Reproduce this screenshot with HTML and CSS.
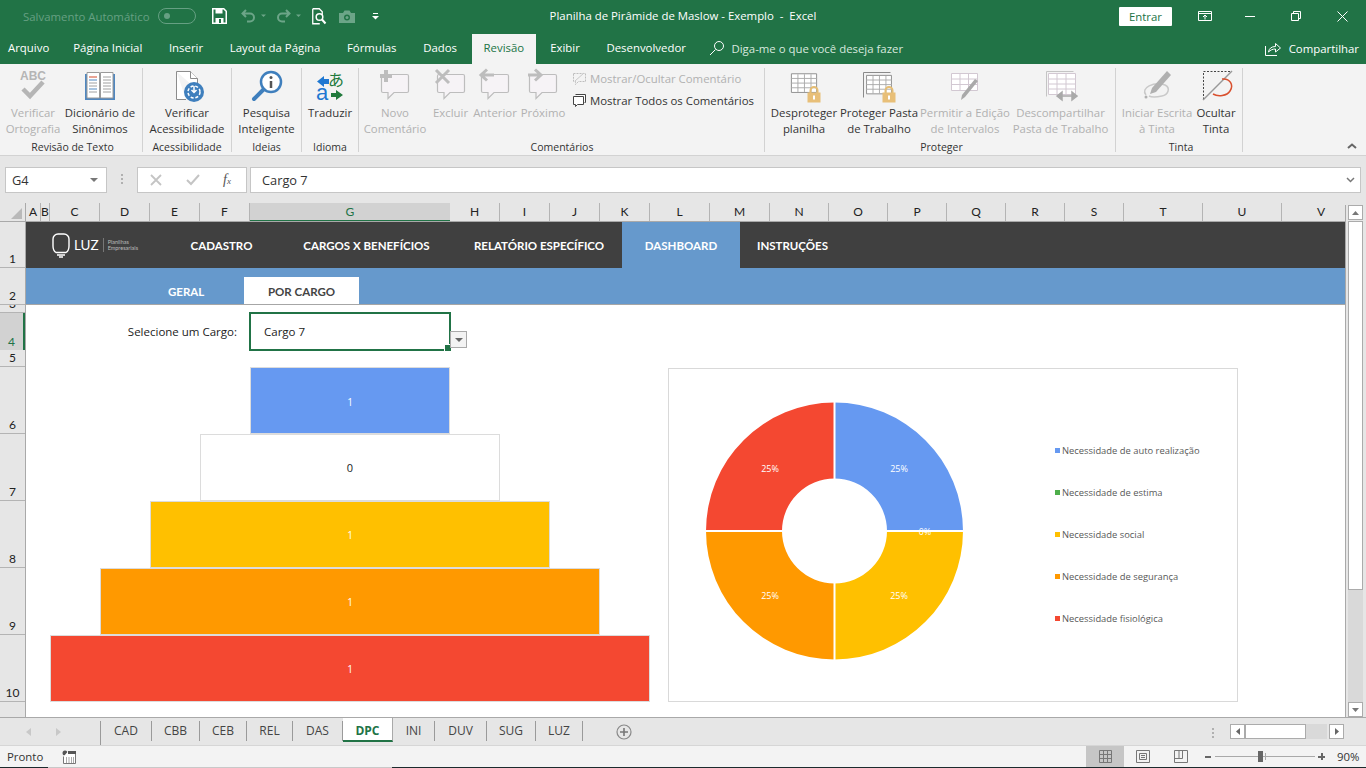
FILE: index.html
```html
<!DOCTYPE html>
<html lang="pt-BR">
<head>
    <meta charset="UTF-8">
    <title>Planilha de Pirâmide de Maslow - Exemplo - Excel</title>
    <link rel="stylesheet" href="styles.css">
</head>
<body>
    <svg class="defs" width="0" height="0">
        <symbol id="bubble" viewBox="0 0 34 36">
            <path d="M5 6.500h24a1.500 1.500 0 0 1 1.500 1.500v15a1.500 1.500 0 0 1-1.500 1.500H16l-6 6v-6H5a1.500 1.500 0 0 1-1.500-1.500V8A1.500 1.500 0 0 1 5 6.500z" fill="#f6f3f6" stroke="#bdbdbd" stroke-width="1.200"/>
        </symbol>
        <symbol id="sheet-grid" viewBox="0 0 30 26">
            <path d="M1.500 1.500h27v20h-27z" fill="#fff" stroke="#8a8a8a"/>
            <path d="M1 6.500h28M1 11.500h28M1 16.500h28M8.500 2v19M15.500 2v19M22.500 2v19" stroke="#a9a9a9" fill="none"/>
        </symbol>
        <symbol id="lock" viewBox="0 0 14 17">
            <path d="M3.500 7V4.500a3.500 3.500 0 0 1 7 0V7" fill="none" stroke="#e5bd73" stroke-width="2"/>
            <rect x="0.500" y="6.500" width="13" height="10" fill="#e8bf78"/>
            <rect x="6" y="9.500" width="2" height="4" fill="#fff"/>
        </symbol>
    </svg>

    <header class="titlebar">
        <div class="qat">
            <span class="autosave">Salvamento Automático</span>
            <span class="toggle"><i></i></span>
            <svg class="qat-save" width="15" height="16" viewBox="0 0 15 16"><path d="M.75.75h11l2.500 2.500v12h-13.500z" fill="none" stroke="#fff" stroke-width="1.500"/><path d="M3.500 1h7v4.500h-7zM3.500 10h8v5.500h-8z" fill="#fff"/><path d="M7 11h2v4H7z" fill="#217346"/></svg>
            <svg class="qat-undo" width="25" height="14" viewBox="0 0 25 14"><path d="M5 1L1.500 4.500 5 8M2 4.500h7a4 4 0 0 1 0 8H6" fill="none" stroke="#6ca588" stroke-width="2"/><path d="M20 5.500h5L22.500 8z" fill="#6ca588"/></svg>
            <svg class="qat-redo" width="25" height="14" viewBox="0 0 25 14"><path d="M10 1l3.500 3.500L10 8M13 4.500H6a4 4 0 0 0 0 8h3" fill="none" stroke="#6ca588" stroke-width="2"/><path d="M20 5.500h5L22.500 8z" fill="#6ca588"/></svg>
            <svg class="qat-preview" width="15" height="17" viewBox="0 0 15 17"><path d="M.75.75h6.500l3 3v3M.75.75v15h7" fill="none" stroke="#fff" stroke-width="1.300"/><circle cx="7.500" cy="9" r="3.300" fill="none" stroke="#fff" stroke-width="1.500"/><path d="M10 11.500l3.500 4" stroke="#fff" stroke-width="2"/></svg>
            <svg class="qat-camera" width="16" height="13" viewBox="0 0 16 13"><path d="M0 3h4l1.500-2.500h5L12 3h4v10H0z" fill="#6ca588"/><circle cx="8" cy="7.500" r="3" fill="#217346"/><circle cx="8" cy="7.500" r="1.500" fill="#6ca588"/></svg>
            <svg class="qat-more" width="7" height="7" viewBox="0 0 7 7"><path d="M1 .5h5" stroke="#fff"/><path d="M0 3h7L3.500 6.500z" fill="#fff"/></svg>
        </div>
        <div class="doc-title">Planilha de Pirâmide de Maslow - Exemplo&nbsp; -&nbsp; Excel</div>
        <div class="win-controls">
            <span class="signin">Entrar</span>
            <svg class="win-display" width="14" height="10" viewBox="0 0 14 10"><path d="M.5.500h13v9H.500zM.5 2.500h13M7 8.500V4M5 6l2-2 2 2" fill="none" stroke="#fff"/></svg>
            <svg class="win-min" width="10" height="1" viewBox="0 0 10 1"><path d="M0 .5h10" stroke="#fff"/></svg>
            <svg class="win-restore" width="10" height="10" viewBox="0 0 10 10"><path d="M.5 2.500h7v7h-7zM2.500 2.500v-2h7v7h-2" fill="none" stroke="#fff"/></svg>
            <svg class="win-close" width="11" height="11" viewBox="0 0 11 11"><path d="M.5.500l10 10M10.500.5l-10 10" stroke="#fff"/></svg>
        </div>
    </header>

    <nav class="tabs">
        <span class="tab tab-file">Arquivo</span>
        <span class="tab">Página Inicial</span>
        <span class="tab">Inserir</span>
        <span class="tab">Layout da Página</span>
        <span class="tab">Fórmulas</span>
        <span class="tab">Dados</span>
        <span class="tab tab-active">Revisão</span>
        <span class="tab">Exibir</span>
        <span class="tab">Desenvolvedor</span>
        <span class="tell-me">
            <svg width="16" height="16" viewBox="0 0 16 16"><circle cx="10" cy="6" r="4.500" fill="none" stroke="#fff"/><path d="M6.500 9.500L1 15" stroke="#fff"/></svg>
            Diga-me o que você deseja fazer
        </span>
        <span class="share">
            <svg width="16" height="15" viewBox="0 0 16 15"><path d="M.5 5v9.500h11.500M3.500 11c.5-3.500 3-5.500 7-5.500V2.500l5 4.500-5 4V8c-3 0-5 1-7 3z" fill="none" stroke="#fff"/></svg>
            Compartilhar
        </span>
    </nav>

    <section class="ribbon">
        <div class="group group-text">
            <div class="group-items">
                <div class="rb w-spell off">
                    <svg class="rb-icon" width="34" height="36" viewBox="0 0 34 36"><text x="17" y="12" text-anchor="middle" class="abc">ABC</text><path d="M7 21l7 7L27 14" fill="none" stroke="#b5b5b5" stroke-width="4.500"/></svg>
                    <span>Verificar<br>Ortografia</span>
                </div>
                <div class="rb w-thes">
                    <svg class="rb-icon" width="34" height="36" viewBox="0 0 34 36"><path d="M2 6h30v26H2z" fill="#4f87c0"/><path d="M4 4.500h12.500V30H4zM17.500 4.500H30V30H17.500z" fill="#fff" stroke="#9a9a9a"/><path d="M6 9h8" stroke="#d2492a"/><path d="M6 12h8M6 21h8" stroke="#4f87c0"/><path d="M6 15h8M6 18h8M6 24h8M20 9h8M20 12h8M20 15h8M20 18h8M20 21h8M20 24h8" stroke="#a0a0a0"/></svg>
                    <span>Dicionário de<br>Sinônimos</span>
                </div>
            </div>
            <div class="group-label">Revisão de Texto</div>
        </div>
        <div class="group group-access">
            <div class="group-items">
                <div class="rb w-access">
                    <svg class="rb-icon" width="34" height="36" viewBox="0 0 34 36"><path d="M6.500 3.500h14l7 7V22M6.500 3.500v28H16" fill="#fff" stroke="#8c8c8c"/><path d="M20.500 3.500v7h7" fill="#fff" stroke="#8c8c8c"/><circle cx="24" cy="24" r="10" fill="#3f7fbd"/><circle cx="24" cy="24" r="6" fill="none" stroke="#fff" stroke-width="1.500" stroke-dasharray="3 1.800"/><path d="M24 18v6M21.500 22l2.500 2.500 2.500-2.500" fill="none" stroke="#fff" stroke-width="1.500"/></svg>
                    <span>Verificar<br>Acessibilidade</span>
                </div>
            </div>
            <div class="group-label">Acessibilidade</div>
        </div>
        <div class="group group-ideas">
            <div class="group-items">
                <div class="rb w-smart">
                    <svg class="rb-icon" width="34" height="36" viewBox="0 0 34 36"><circle cx="21" cy="14" r="10" fill="#fff" stroke="#3f7fbd" stroke-width="2.500"/><path d="M13.500 21.500L4 31" stroke="#3f7fbd" stroke-width="4" stroke-linecap="round"/><path d="M21 13v7" stroke="#555" stroke-width="2.500"/><circle cx="21" cy="9.500" r="1.500" fill="#555"/></svg>
                    <span>Pesquisa<br>Inteligente</span>
                </div>
            </div>
            <div class="group-label">Ideias</div>
        </div>
        <div class="group group-lang">
            <div class="group-items">
                <div class="rb w-trans">
                    <svg class="rb-icon" width="34" height="36" viewBox="0 0 34 36"><text x="15" y="18" class="kana">あ</text><text x="3" y="32" class="latin">a</text><path d="M4 13.500L11 8v3h5v5h-5v3z" fill="#1f78d1"/><path d="M30 27l-7-5v3h-5v4h5v3z" fill="#217a3c"/></svg>
                    <span>Traduzir</span>
                </div>
            </div>
            <div class="group-label">Idioma</div>
        </div>
        <div class="group group-comments">
            <div class="group-items">
                <div class="rb w-new off">
                    <svg class="rb-icon" width="34" height="36" viewBox="0 0 34 36"><use href="#bubble" width="34" height="36"/><path d="M8 2v12M2 8h12" stroke="#bdbdbd" stroke-width="4"/></svg>
                    <span>Novo<br>Comentário</span>
                </div>
                <div class="rb w-del off">
                    <svg class="rb-icon" width="34" height="36" viewBox="0 0 34 36"><use href="#bubble" width="34" height="36"/><path d="M2 2l13 13M15 2L2 15" stroke="#bdbdbd" stroke-width="3"/></svg>
                    <span>Excluir</span>
                </div>
                <div class="rb w-prev off">
                    <svg class="rb-icon" width="34" height="36" viewBox="0 0 34 36"><use href="#bubble" width="34" height="36"/><path d="M16 7H5M9 1.500L3 7l6 5.500" fill="none" stroke="#bdbdbd" stroke-width="3"/></svg>
                    <span>Anterior</span>
                </div>
                <div class="rb w-next off">
                    <svg class="rb-icon" width="34" height="36" viewBox="0 0 34 36"><use href="#bubble" width="34" height="36"/><path d="M2 7h11M9 1.500L15 7l-6 5.500" fill="none" stroke="#bdbdbd" stroke-width="3"/></svg>
                    <span>Próximo</span>
                </div>
                <div class="rb-small">
                    <div class="small-row off">
                        <svg width="15" height="15" viewBox="0 0 15 15"><path d="M1.500 2.500h12v8h-7l-3 3v-3h-2z" fill="none" stroke="#bdbdbd" stroke-dasharray="2 1"/><path d="M3 10l9-8" stroke="#c9c9c9"/></svg>
                        Mostrar/Ocultar Comentário
                    </div>
                    <div class="small-row">
                        <svg width="15" height="15" viewBox="0 0 15 15"><path d="M3.500 1.500h10v8h-1M1.500 3.500h10v8h-6l-2 2v-2h-2z" fill="#fff" stroke="#444"/></svg>
                        Mostrar Todos os Comentários
                    </div>
                </div>
            </div>
            <div class="group-label">Comentários</div>
        </div>
        <div class="group group-protect">
            <div class="group-items">
                <div class="rb w-unprotect">
                    <svg class="rb-icon" width="34" height="36" viewBox="0 0 34 36"><use href="#sheet-grid" x="3" y="4" width="28" height="25"/><use href="#lock" x="20" y="18" width="14" height="17"/></svg>
                    <span>Desproteger<br>planilha</span>
                </div>
                <div class="rb w-book">
                    <svg class="rb-icon" width="34" height="36" viewBox="0 0 34 36"><path d="M1.500 4.500h27M1.500 4.500v25" stroke="#8a8a8a" fill="none"/><use href="#sheet-grid" x="3" y="6" width="28" height="24"/><use href="#lock" x="20" y="18" width="14" height="17"/></svg>
                    <span>Proteger Pasta<br>de Trabalho</span>
                </div>
                <div class="rb w-ranges off">
                    <svg class="rb-icon" width="34" height="36" viewBox="0 0 34 36"><path d="M3.500 5.500h26v17h-26zM3.500 11h26M3.500 16.500h26M12 5.500v17M20.500 5.500v17" fill="#fff" stroke="#d2c8d2"/><path d="M30 13L17 29l-4 3 1-5 13-16z" fill="#a9a9a9"/></svg>
                    <span>Permitir a Edição<br>de Intervalos</span>
                </div>
                <div class="rb w-unshare off">
                    <svg class="rb-icon" width="34" height="36" viewBox="0 0 34 36"><path d="M2.500 3.500h27M2.500 3.500v25" stroke="#c4c4c4" fill="none"/><path d="M4.500 5.500h27v21h-27zM4.500 11h27M4.500 16h27M4.500 21h27M13 5.500v21M22 5.500v21" fill="#fff" stroke="#d2c8d2"/><path d="M13 28h20M13 28l5-4v8zM33 28l-5-4v8z" fill="#a9a9a9" stroke="#a9a9a9" stroke-width="1.500"/></svg>
                    <span>Descompartilhar<br>Pasta de Trabalho</span>
                </div>
            </div>
            <div class="group-label">Proteger</div>
        </div>
        <div class="group group-ink">
            <div class="group-items">
                <div class="rb w-startink off">
                    <svg class="rb-icon" width="34" height="36" viewBox="0 0 34 36"><path d="M6 27C0 20 14 13 25 17c6 3 3 10-3 11-5 1-11 1-13 0" fill="none" stroke="#c9c9c9" stroke-width="1.500"/><path d="M27 3l4 4-15 17-6 2 2-6z" fill="#b0b0b0"/><circle cx="6" cy="29" r="1.500" fill="#b0b0b0"/></svg>
                    <span>Iniciar Escrita<br>à Tinta</span>
                </div>
                <div class="rb w-hideink">
                    <svg class="rb-icon" width="34" height="36" viewBox="0 0 34 36"><path d="M4.500 31.500V3.500h28" fill="none" stroke="#444" stroke-dasharray="2 1.500"/><path d="M4 32L33 3" stroke="#999" stroke-width="1.500"/><path d="M23 11c8-1 12 6 8 12-3 5-12 6-17 3" fill="none" stroke="#d9502e" stroke-width="1.500"/></svg>
                    <span>Ocultar<br>Tinta</span>
                </div>
            </div>
            <div class="group-label">Tinta</div>
        </div>
        <svg class="collapse" width="10" height="6" viewBox="0 0 10 6"><path d="M1 5l4-3.500L9 5" fill="none" stroke="#666" stroke-width="2"/></svg>
    </section>

    <section class="formula-bar">
        <div class="name-box">G4<svg width="8" height="4" viewBox="0 0 8 4"><path d="M0 0h8L4 4z" fill="#777"/></svg></div>
        <div class="fb-dots"><i></i><i></i><i></i></div>
        <div class="fb-buttons">
            <svg width="12" height="12" viewBox="0 0 12 12"><path d="M1 1l10 10M11 1L1 11" stroke="#c4c4c4" stroke-width="1.800"/></svg>
            <svg width="14" height="12" viewBox="0 0 14 12"><path d="M1 6l4 4 8-9" fill="none" stroke="#c4c4c4" stroke-width="2"/></svg>
            <span class="fx">f<sub>x</sub></span>
        </div>
        <div class="fb-input">Cargo 7<svg width="9" height="6" viewBox="0 0 9 6"><path d="M1 1l3.500 3.500L8 1" fill="none" stroke="#777" stroke-width="1.500"/></svg></div>
    </section>

    <div class="col-headers">
        <span class="corner"><i></i></span>
        <span>A</span><span>B</span><span>C</span><span>D</span><span>E</span><span>F</span>
        <span class="selected">G</span>
        <span>H</span><span>I</span><span>J</span><span>K</span><span>L</span><span>M</span><span>N</span>
        <span>O</span><span>P</span><span>Q</span><span>R</span><span>S</span><span>T</span><span>U</span><span>V</span>
    </div>

    <main class="workbook">
        <div class="row-headers">
            <span class="r-1">1</span>
            <span class="r-2">2</span>
            <span class="r-3">3</span>
            <span class="r-4 selected">4</span>
            <span class="r-5">5</span>
            <span class="r-6">6</span>
            <span class="r-6">7</span>
            <span class="r-6">8</span>
            <span class="r-6">9</span>
            <span class="r-6">10</span>
            <span class="r-rest"></span>
        </div>

        <div class="sheet">
            <div class="sheet-nav">
                <div class="logo">
                    <svg width="18" height="25" viewBox="0 0 18 25"><path d="M4 19.500C1.500 18 1 15 1 13V6a5 5 0 0 1 5-5h6a5 5 0 0 1 5 5v7c0 2-.5 5-3 6.500z" fill="none" stroke="#fff" stroke-width="1.400"/><path d="M5 22h8M7 24h4" stroke="#fff" stroke-width="1.300"/></svg>
                    <span class="logo-word">LUZ</span>
                    <span class="logo-sub">Planilhas<br>Empresariais</span>
                </div>
                <span class="nav-item n-cad">CADASTRO</span>
                <span class="nav-item n-cargos">CARGOS X BENEFÍCIOS</span>
                <span class="nav-item n-rel">RELATÓRIO ESPECÍFICO</span>
                <span class="nav-item n-dash">DASHBOARD</span>
                <span class="nav-item n-inst">INSTRUÇÕES</span>
            </div>
            <div class="sheet-subnav">
                <span class="sub-geral">GERAL</span>
                <span class="sub-cargo">POR CARGO</span>
            </div>
            <div class="picker">
                <span class="picker-label">Selecione um Cargo:</span>
                <span class="picker-cell">Cargo 7</span>
                <span class="picker-drop"><svg width="8" height="4" viewBox="0 0 8 4"><path d="M0 0h8L4 4z" fill="#666"/></svg></span>
            </div>
            <div class="dashboard">
                <div class="pyramid">
                    <div class="step s1">1</div>
                    <div class="step s2">0</div>
                    <div class="step s3">1</div>
                    <div class="step s4">1</div>
                    <div class="step s5">1</div>
                </div>
                <div class="chart">
                    <svg class="donut" width="280" height="280" viewBox="-140.500 -140 280 280">
                        <path d="M0 -128.500A128.500 128.500 0 0 1 128.500 0H52.500A52.500 52.500 0 0 0 0 -52.500z" fill="#6699f1"/>
                        <path d="M128.500 0A128.500 128.500 0 0 1 0 128.500V52.500A52.500 52.500 0 0 0 52.500 0z" fill="#ffc000"/>
                        <path d="M0 128.500A128.500 128.500 0 0 1 -128.500 0H-52.500A52.500 52.500 0 0 0 0 52.500z" fill="#ff9900"/>
                        <path d="M-128.500 0A128.500 128.500 0 0 1 0 -128.500V-52.500A52.500 52.500 0 0 0 -52.500 0z" fill="#f44831"/>
                        <path d="M0 -130V-52M0 52V130M-130 0H-52M52 0H130" stroke="#fff" stroke-width="2"/>
                        <g class="pct">
                            <text x="64.500" y="-59">25%</text>
                            <text x="90.500" y="4">0%</text>
                            <text x="64.500" y="68">25%</text>
                            <text x="-64.500" y="68">25%</text>
                            <text x="-64.500" y="-59">25%</text>
                        </g>
                    </svg>
                    <ul class="legend">
                        <li><i class="k1"></i>Necessidade de auto realização</li>
                        <li><i class="k2"></i>Necessidade de estima</li>
                        <li><i class="k3"></i>Necessidade social</li>
                        <li><i class="k4"></i>Necessidade de segurança</li>
                        <li><i class="k5"></i>Necessidade fisiológica</li>
                    </ul>
                </div>
            </div>
        </div>

        <div class="vscroll">
            <span class="sb-btn"><svg width="7" height="4" viewBox="0 0 7 4"><path d="M3.500 0L7 4H0z" fill="#777"/></svg></span>
            <span class="sb-thumb"></span>
            <span class="sb-track"></span>
            <span class="sb-btn"><svg width="7" height="4" viewBox="0 0 7 4"><path d="M0 0h7L3.500 4z" fill="#777"/></svg></span>
        </div>
    </main>

    <section class="sheet-tabs">
        <div class="tab-arrows">
            <svg width="5" height="8" viewBox="0 0 5 8"><path d="M5 0v8L0 4z" fill="#c8c8c8"/></svg>
            <svg width="5" height="8" viewBox="0 0 5 8"><path d="M0 0v8l5-4z" fill="#c8c8c8"/></svg>
        </div>
        <div class="stabs">
            <span class="t-cad">CAD</span>
            <span class="t-cbb">CBB</span>
            <span class="t-ceb">CEB</span>
            <span class="t-rel">REL</span>
            <span class="t-das">DAS</span>
            <span class="t-dpc active">DPC</span>
            <span class="t-ini">INI</span>
            <span class="t-duv">DUV</span>
            <span class="t-sug">SUG</span>
            <span class="t-luz">LUZ</span>
        </div>
        <svg class="add-sheet" width="16" height="16" viewBox="0 0 16 16"><circle cx="8" cy="8" r="7" fill="none" stroke="#888" stroke-width="1.200"/><path d="M8 4v8M4 8h8" stroke="#777" stroke-width="1.600"/></svg>
        <div class="hscroll">
            <div class="fb-dots"><i></i><i></i><i></i></div>
            <span class="hs-btn"><svg width="4" height="7" viewBox="0 0 4 7"><path d="M4 0v7L0 3.500z" fill="#666"/></svg></span>
            <span class="hs-thumb"></span>
            <span class="hs-track"></span>
            <span class="hs-btn"><svg width="4" height="7" viewBox="0 0 4 7"><path d="M0 0v7l4-3.500z" fill="#666"/></svg></span>
        </div>
    </section>

    <footer class="statusbar">
        <span class="ready">Pronto</span>
        <svg class="macro" width="14" height="14" viewBox="0 0 14 14"><circle cx="3" cy="3" r="2.500" fill="#555"/><path d="M6 1.500h7.500v12H1.500V6.500" fill="#fff" stroke="#777"/><path d="M6 1h8v3H6z" fill="#555"/><path d="M4 8h1M6.500 8h1M9 8h1M11 8h1M4 10h1M6.500 10h1M9 10h1M11 10h1M4 12h1M6.500 12h1M9 12h1M11 12h1" stroke="#555"/></svg>
        <div class="views">
            <span class="view on"><svg width="13" height="13" viewBox="0 0 13 13"><path d="M.5.500h12v12H.500zM4.500.5v12M8.500.5v12M.5 4.500h12M.5 8.500h12" fill="none" stroke="#777"/></svg></span>
            <span class="view"><svg width="14" height="13" viewBox="0 0 14 13"><path d="M.5.500h13v12H.500z" fill="none" stroke="#777"/><path d="M3.500 3.500h7v6h-7zM5 5.500h4M5 7.500h4" fill="none" stroke="#777"/></svg></span>
            <span class="view"><svg width="14" height="13" viewBox="0 0 14 13"><path d="M.5.500h13v12H.500zM.5 8.500h8V.5M5 8.500V.5" fill="none" stroke="#777"/></svg></span>
        </div>
        <div class="zoom">
            <span class="z-minus"></span>
            <span class="z-slider"><i></i><b></b></span>
            <span class="z-plus"></span>
            <span class="z-val">90%</span>
        </div>
    </footer>
    <div class="window-edge"><i></i><b></b><i></i></div>
</body>
</html>
```

FILE: styles.css
```css
* {
    box-sizing: border-box;
}
html, body {
    margin: 0;
    padding: 0;
}
body {
    width: 1366px;
    height: 768px;
    overflow: hidden;
    font-family: "Open Sans", "Liberation Sans", sans-serif;
    font-size: 11.4px;
    color: #333;
    background-color: #e6e6e6;
}
svg {
    display: block;
    flex: none;
}
.defs {
    position: absolute;
}

/* Title bar */
.titlebar {
    height: 32px;
    display: flex;
    align-items: center;
    background-color: #217346;
    color: #fff;
    position: relative;
}
.qat {
    display: flex;
    align-items: center;
    padding-left: 23px;
}
.autosave {
    width: 135px;
    color: #66a083;
    white-space: nowrap;
}
.toggle {
    width: 38px;
    height: 16px;
    border: 1px solid #66a083;
    border-radius: 8px;
    padding: 4px 5px;
}
.toggle i {
    display: block;
    width: 6px;
    height: 6px;
    border-radius: 50%;
    background-color: #66a083;
}
.qat-save { margin-left: 16px; }
.qat-undo { margin-left: 14px; }
.qat-redo { margin-left: 10px; }
.qat-preview { margin-left: 11px; }
.qat-camera { margin-left: 12px; }
.qat-more { margin-left: 17px; }
.doc-title {
    text-align: center;
    position: absolute;
    left: 0;
    right: 0;
    top: 8px;
}
.win-controls {
    margin-left: auto;
    display: flex;
    align-items: center;
    position: relative;
    padding-right: 18px;
}
.signin {
    width: 53px;
    height: 19px;
    line-height: 19px;
    text-align: center;
    background-color: #fff;
    color: #217346;
    border-radius: 1px;
}
.win-display { margin-left: 26px; }
.win-min { margin-left: 33px; }
.win-restore { margin-left: 36px; }
.win-close { margin-left: 36px; }

/* Ribbon tabs */
.tabs {
    height: 32px;
    display: flex;
    align-items: flex-end;
    background-color: #217346;
    color: #fff;
    padding-left: 8px;
}
.tab {
    height: 30px;
    line-height: 28px;
    margin-right: 26.600px;
    white-space: nowrap;
}
.tab-file {
    margin-right: 24px;
}
.tab-active {
    background-color: #f3f3f3;
    color: #217346;
    padding: 0 12px;
    margin: 0 14px 0 -12px;
}
.tell-me {
    display: flex;
    align-items: center;
    gap: 6px;
    height: 28px;
    margin-bottom: 2px;
    margin-left: -3px;
    color: #d8e8df;
    white-space: nowrap;
}
.share {
    display: flex;
    align-items: center;
    gap: 8px;
    height: 28px;
    margin-bottom: 2px;
    margin-left: auto;
    padding-right: 7px;
}

/* Ribbon */
.ribbon {
    height: 92px;
    display: flex;
    position: relative;
    background-color: #f3f3f3;
    border-bottom: 1px solid #d2d2d2;
}
.group {
    height: 84px;
    margin-top: 4px;
    border-right: 1px solid #d2d2d2;
    display: flex;
    flex-direction: column;
    flex: none;
}
.group-items {
    flex: 1;
    display: flex;
}
.group-label {
    height: 13px;
    line-height: 17px;
    text-align: center;
    font-size: 10.500px;
    color: #333;
    white-space: nowrap;
}
.group-text { width: 143px; padding-left: 3px; }
.group-access { width: 89px; }
.group-ideas { width: 70px; }
.group-lang { width: 57px; }
.group-comments { width: 406px; padding-left: 1px; }
.group-protect { width: 351px; padding-left: 3px; }
.group-ink { width: 127px; padding-left: 4px; }
.rb {
    display: flex;
    flex-direction: column;
    align-items: center;
    text-align: center;
    line-height: 16px;
    flex: none;
    white-space: nowrap;
}
.rb span {
    margin-top: 1px;
}
.off {
    color: #b1b1b1;
}
.w-spell { width: 60px; }
.w-thes { width: 74px; }
.w-access { width: 88px; }
.w-smart { width: 69px; }
.w-trans { width: 56px; }
.w-new { width: 70px; }
.w-del { width: 41px; }
.w-prev { width: 48px; }
.w-next { width: 48px; }
.w-unprotect { width: 72px; }
.w-book { width: 78px; }
.w-ranges { width: 94px; }
.w-unshare { width: 97px; }
.w-startink { width: 74px; }
.w-hideink { width: 44px; }
.rb-small {
    margin-left: 5px;
    padding-top: 2px;
    display: flex;
    flex-direction: column;
    gap: 5px;
}
.small-row {
    display: flex;
    align-items: center;
    gap: 3px;
    height: 17px;
    white-space: nowrap;
}
.abc {
    font-family: "Liberation Sans", sans-serif;
    font-size: 12px;
    font-weight: bold;
    fill: #b5b5b5;
}
.kana {
    font-family: "Noto Sans CJK JP", sans-serif;
    font-size: 16px;
    fill: #217a3c;
}
.latin {
    font-family: "Liberation Sans", sans-serif;
    font-size: 22px;
    fill: #1f78d1;
}
.collapse {
    position: absolute;
    right: 9px;
    bottom: 6px;
}

/* Formula bar */
.formula-bar {
    height: 47px;
    display: flex;
    align-items: flex-start;
    padding: 11px 5px 0;
    font-size: 12.800px;
}
.name-box, .fb-buttons, .fb-input {
    height: 26px;
    background-color: #fff;
    border: 1px solid #c6c6c6;
    display: flex;
    align-items: center;
}
.name-box {
    width: 102px;
    justify-content: space-between;
    padding: 0 8px 0 6px;
}
.fb-dots {
    width: 30px;
    display: flex;
    flex-direction: column;
    align-items: center;
    gap: 2px;
    padding-top: 7px;
}
.fb-dots i {
    width: 2px;
    height: 2px;
    background-color: #b0b0b0;
}
.fb-buttons {
    width: 110px;
    padding-left: 12px;
    gap: 24px;
}
.fx {
    font-family: "Liberation Serif", serif;
    font-style: italic;
    font-size: 14px;
    color: #555;
    margin-left: -1px;
}
.fx sub {
    font-size: 9px;
    vertical-align: baseline;
}
.fb-input {
    flex: 1;
    margin-left: 3px;
    padding: 0 5px 0 11px;
    justify-content: space-between;
}

/* Column and row headers */
.col-headers {
    height: 19px;
    width: 1345px;
    overflow: hidden;
    display: grid;
    grid-template-columns: 26px 15px 9px 50px 50px 50px 50px 200px 50px 50px 50px 50px 60px 60px 59px 59px 59px 59px 59px 59px 79px 79px 79px;
    font-family: "Lato", sans-serif;
    font-size: 12px;
    color: #222;
    border-bottom: 1px solid #a9a9a9;
}
.col-headers span {
    text-align: center;
    line-height: 18px;
    border-right: 1px solid #b4b4b4;
    position: relative;
}
.col-headers .selected {
    background-color: #d2d2d2;
    color: #217346;
    border-right: none;
    border-bottom: 2px solid #217346;
    height: 19px;
}
.col-headers .corner {
    border-right: 1px solid #a9a9a9;
}
.corner i {
    position: absolute;
    right: 3px;
    bottom: 3px;
    width: 0;
    height: 0;
    border-left: 11px solid transparent;
    border-bottom: 11px solid #b9b9b9;
}
.workbook {
    height: 495px;
    display: flex;
}
.row-headers {
    width: 26px;
    flex: none;
    display: flex;
    flex-direction: column;
    font-family: "Lato", sans-serif;
    font-size: 12px;
    color: #222;
    border-right: 1px solid #a9a9a9;
}
.row-headers span {
    display: flex;
    align-items: flex-end;
    justify-content: center;
    padding-bottom: 1px;
    border-bottom: 1px solid #b4b4b4;
    overflow: hidden;
    line-height: 15px;
}
.row-headers .selected {
    background-color: #d2d2d2;
    color: #217346;
    border-right: 2px solid #217346;
    border-bottom: none;
}
.r-1 { height: 46px; }
.r-2 { height: 37px; }
.r-3 { height: 8px; }
.r-4 { height: 37px; }
.r-5 { height: 17px; }
.r-6 { height: 67px; }
.r-rest { height: 15px; border-bottom: none !important; }

/* Sheet content */
.sheet {
    width: 1319px;
    flex: none;
    display: flex;
    flex-direction: column;
    background-color: #fff;
    font-family: "Lato", sans-serif;
}
.sheet-nav {
    height: 46px;
    flex: none;
    display: flex;
    align-items: center;
    background-color: #404040;
    color: #fff;
    font-weight: bold;
    font-size: 11.500px;
}
.logo {
    width: 165px;
    flex: none;
    display: flex;
    align-items: center;
    padding-left: 26px;
    font-weight: normal;
}
.logo-word {
    font-size: 13.500px;
    margin-left: 4px;
    padding-right: 4px;
    border-right: 1px solid #777;
    line-height: 14px;
}
.logo-sub {
    font-size: 5.500px;
    line-height: 6px;
    margin-left: 4px;
    color: #bbb;
    white-space: nowrap;
}
.nav-item {
    height: 46px;
    flex: none;
    display: flex;
    align-items: center;
    justify-content: center;
    white-space: nowrap;
}
.n-cad { width: 61px; }
.n-cargos { width: 123px; margin-left: 53px; }
.n-rel { width: 128px; margin-left: 47px; }
.n-dash { width: 118px; margin-left: 19px; background-color: #6699cc; }
.n-inst { width: 71px; margin-left: 17px; }
.sheet-subnav {
    height: 37px;
    flex: none;
    display: flex;
    align-items: flex-end;
    background-color: #6699cc;
    color: #fff;
    font-weight: bold;
    font-size: 11.500px;
    border-bottom: 1px solid #a6a6a6;
}
.sub-geral {
    width: 35px;
    margin-left: 142px;
    margin-bottom: 6px;
    white-space: nowrap;
}
.sub-cargo {
    width: 115px;
    height: 27px;
    line-height: 30px;
    margin-left: 41px;
    text-align: center;
    background-color: #fff;
    color: #444;
}
.picker {
    height: 37px;
    flex: none;
    margin-top: 8px;
    display: flex;
    align-items: center;
    position: relative;
    font-family: "Open Sans", sans-serif;
    font-size: 11.500px;
    color: #222;
}
.picker-label {
    width: 211px;
    text-align: right;
    white-space: nowrap;
}
.picker-cell {
    width: 202px;
    height: 39px;
    line-height: 36px;
    margin-left: 12px;
    padding-left: 13px;
    border: 2px solid #217346;
    position: relative;
}
.picker-cell::after {
    content: "";
    position: absolute;
    right: -3px;
    bottom: -3px;
    width: 6px;
    height: 6px;
    background-color: #217346;
    border: 1px solid #fff;
}
.picker-drop {
    position: absolute;
    left: 424px;
    top: 18px;
    width: 17px;
    height: 17px;
    background-color: #f3f3f3;
    border: 1px solid #a9a9a9;
    display: flex;
    align-items: center;
    justify-content: center;
}
.dashboard {
    margin-top: 17px;
    display: flex;
    align-items: flex-start;
}
.pyramid {
    width: 600px;
    margin-left: 24px;
    flex: none;
    display: flex;
    flex-direction: column;
    align-items: center;
    font-family: "Open Sans", sans-serif;
    font-size: 10px;
}
.step {
    height: 67px;
    line-height: 67px;
    text-align: center;
    color: #fff;
    border: 1px solid #dcdcdc;
}
.s1 { width: 200px; background-color: #6699f1; line-height: 69px; }
.s2 { width: 300px; background-color: #fff; color: #222; font-size: 11px; line-height: 66px; }
.s3 { width: 400px; background-color: #ffc000; }
.s4 { width: 500px; background-color: #ff9900; }
.s5 { width: 600px; background-color: #f44831; }
.chart {
    width: 570px;
    height: 334px;
    margin-left: 18px;
    margin-top: 1px;
    border: 1px solid #d9d9d9;
    display: flex;
    align-items: flex-start;
}
.donut {
    margin: 22px 0 0 25px;
}
.pct text {
    font-family: "Open Sans", sans-serif;
    font-size: 9px;
    fill: #fff;
    text-anchor: middle;
}
.legend {
    list-style-type: none;
    margin: 75px 0 0 81px;
    padding: 0;
    font-family: "Open Sans", sans-serif;
    font-size: 9.400px;
    color: #595959;
    display: flex;
    flex-direction: column;
    gap: 30px;
}
.legend li {
    display: flex;
    align-items: center;
    height: 12px;
    white-space: nowrap;
}
.legend i {
    width: 5px;
    height: 5px;
    margin-right: 2px;
}
.k1 { background-color: #6699f1; }
.k2 { background-color: #4eae4a; }
.k3 { background-color: #ffc000; }
.k4 { background-color: #ff9900; }
.k5 { background-color: #f44831; }
.vscroll {
    width: 21px;
    flex: none;
    margin-top: -17px;
    padding: 0 3px 0 2px;
    display: flex;
    flex-direction: column;
    background-color: #e6e6e6;
    border-left: 1px solid #a9a9a9;
}
.sb-btn {
    height: 15px;
    flex: none;
    background-color: #fff;
    border: 1px solid #ababab;
    display: flex;
    align-items: center;
    justify-content: center;
}
.sb-thumb {
    flex: 1;
    background-color: #fff;
    border: 1px solid #ababab;
    margin-top: 1px;
}
.sb-track {
    height: 112px;
    flex: none;
    background-color: #d9d9d9;
}

/* Sheet tabs */
.sheet-tabs {
    height: 28px;
    display: flex;
    align-items: flex-start;
    border-top: 1px solid #a9a9a9;
    position: relative;
}
.tab-arrows {
    width: 100px;
    flex: none;
    display: flex;
    gap: 25px;
    padding: 10px 0 0 26px;
}
.stabs {
    display: flex;
    height: 24px;
    margin-top: 3px;
    border-left: 1px solid #9a9a9a;
    font-size: 12px;
    color: #444;
}
.stabs span {
    text-align: center;
    line-height: 19px;
    border-right: 1px solid #9a9a9a;
    height: 20px;
}
.t-cad { width: 51px; }
.t-cbb { width: 48px; }
.t-ceb { width: 47px; }
.t-rel { width: 46px; }
.t-das { width: 50px; }
.stabs .t-dpc {
    width: 50px;
    height: 24px;
    margin-top: -3px;
    line-height: 25px;
    background-color: #fff;
    color: #217346;
    font-weight: bold;
    border-bottom: 2px solid #217346;
    border-right: 1px solid #a9a9a9;
}
.t-ini { width: 42px; }
.t-duv { width: 52px; }
.t-sug { width: 49px; }
.t-luz { width: 47px; }
.add-sheet {
    margin: 6px 0 0 33px;
}
.hscroll {
    margin-left: auto;
    margin-right: 22px;
    padding-top: 6px;
    display: flex;
}
.hscroll .fb-dots {
    width: 34px;
    margin-top: -3px;
}
.hs-btn {
    width: 15px;
    height: 15px;
    background-color: #fff;
    border: 1px solid #ababab;
    display: flex;
    align-items: center;
    justify-content: center;
}
.hs-thumb {
    width: 61px;
    height: 15px;
    background-color: #fff;
    border: 1px solid #ababab;
}
.hs-track {
    width: 21px;
    height: 15px;
    margin-right: 2px;
    background-color: #d9d9d9;
}

/* Status bar */
.statusbar {
    height: 22px;
    display: flex;
    align-items: center;
    background-color: #f3f3f3;
    border-top: 1px solid #d6d6d6;
    padding-left: 7px;
}
.ready {
    width: 55px;
}
.views {
    margin-left: auto;
    display: flex;
    align-self: stretch;
}
.view {
    width: 38px;
    display: flex;
    align-items: center;
    justify-content: center;
}
.view.on {
    background-color: #c6c6c6;
}
.zoom {
    display: flex;
    align-items: center;
    width: 166px;
    flex: none;
}
.z-minus {
    width: 6px;
    height: 2px;
    margin-left: 5px;
    background-color: #666;
}
.z-slider {
    width: 100px;
    height: 1px;
    margin-left: 4px;
    background-color: #a9a9a9;
    position: relative;
}
.z-slider i {
    position: absolute;
    left: 43px;
    top: -5px;
    width: 5px;
    height: 11px;
    background-color: #666;
}
.z-slider b {
    position: absolute;
    left: 50px;
    top: -3px;
    width: 1px;
    height: 7px;
    background-color: #a9a9a9;
}
.z-plus {
    width: 7px;
    height: 7px;
    margin-left: 3px;
    background:
        linear-gradient(#666, #666) center / 7px 2px no-repeat,
        linear-gradient(#666, #666) center / 2px 7px no-repeat;
}
.z-val {
    margin-left: 12px;
}
.window-edge {
    height: 1px;
    display: flex;
}
.window-edge i {
    background-color: #1c2a2c;
    flex: 1;
}
.window-edge i:first-child {
    flex: none;
    width: 48px;
}
.window-edge b {
    width: 344px;
    background-color: #c8c8c8;
}
```
